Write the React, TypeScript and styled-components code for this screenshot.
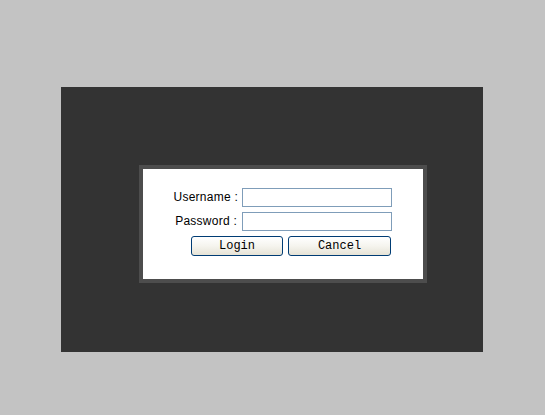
import React from "react"
import styled, {createGlobalStyle} from "styled-components"

const GlobalStyle = createGlobalStyle`
  html, body {
    margin: 0;
    padding: 0;
    background-color: #c3c3c3;
  }
  body {
    font-family: "Liberation Sans", Arial, sans-serif;
    width: 545px;
    height: 415px;
    overflow: hidden;
  }
`;

const Stage = styled.div`
  padding: 87px 0 0 61px;
`;

const Panel = styled.div`
  width: 422px;
  height: 265px;
  box-sizing: border-box;
  background-color: #333333;
  padding: 78px 0 0 78px;
`;

const LoginBox = styled.div`
  width: 288px;
  height: 118px;
  box-sizing: border-box;
  border: 4px solid #4d4d4d;
  background-color: #ffffff;
  padding-top: 19px;
`;

const FormGrid = styled.form`
  display: grid;
  grid-template-columns: 95px 150px;
  column-gap: 4px;
  row-gap: 5px;
  margin: 0;
`;

const Label = styled.label`
  font-size: 12px;
  letter-spacing: 0.25px;
  color: #000;
  text-align: right;
  line-height: 19px;
  padding-right: ${p => p.$shift || 0}px;
`;

const TextInput = styled.input`
  width: 150px;
  height: 19px;
  box-sizing: border-box;
  border: 1px solid #7f9db9;
  padding: 0 2px;
  margin: 0;
  outline: none;
  font-size: 12px;
`;

const ButtonRow = styled.div`
  grid-column: 1 / span 2;
  display: flex;
  gap: 5px;
  padding-left: 48px;
`;

const Button = styled.button`
  width: ${p => p.$w}px;
  height: 20px;
  box-sizing: border-box;
  margin: 0;
  padding: 0;
  border: 1px solid #003c74;
  border-radius: 3px;
  background: linear-gradient(#ffffff 0%, #f5f4ee 50%, #e6e3d6 100%);
  font-family: "Liberation Mono", "Courier New", monospace;
  font-size: 12px;
  color: #000;
  line-height: 18px;
`;

export default function App() {
    return (
        <>
            <GlobalStyle/>
            <Stage>
                <Panel>
                    <LoginBox>
                        <FormGrid onSubmit={e => e.preventDefault()}>
                            <Label htmlFor="username">Username :</Label>
                            <TextInput id="username" type="text"/>
                            <Label htmlFor="password" $shift={1}>Password :</Label>
                            <TextInput id="password" type="password"/>
                            <ButtonRow>
                                <Button type="submit" $w={92}>Login</Button>
                                <Button type="button" $w={103}>Cancel</Button>
                            </ButtonRow>
                        </FormGrid>
                    </LoginBox>
                </Panel>
            </Stage>
        </>
    )
}
